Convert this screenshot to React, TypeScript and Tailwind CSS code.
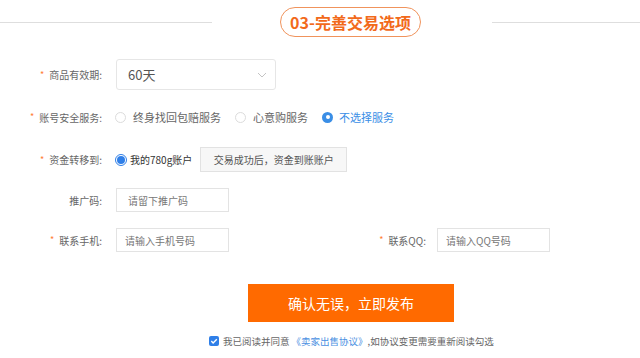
import type { ReactNode } from 'react'

function Label({ text, required = true, className = 'w-[102px]' }: { text: string; required?: boolean; className?: string }) {
  return (
    <div className={`${className} flex items-center justify-end text-[10px] text-[#666] shrink-0`}>
      {required && <span className="text-[#ff7d33] mr-[5px] text-[9px]">*</span>}
      <span>{text}:</span>
    </div>
  )
}

function Radio({ checked = false, variant = 'fill' }: { checked?: boolean; variant?: 'fill' | 'ring' }) {
  if (!checked) {
    return <span className="w-[11px] h-[11px] rounded-full border border-[#dcdcdc] bg-white shrink-0" />
  }
  if (variant === 'ring') {
    return (
      <span className="w-[12px] h-[12px] rounded-full border border-[#2f7fe8] bg-white flex items-center justify-center shrink-0">
        <span className="w-[8px] h-[8px] rounded-full bg-[#2f7fe8]" />
      </span>
    )
  }
  return (
    <span className="w-[11px] h-[11px] rounded-full bg-[#3a8ee6] flex items-center justify-center shrink-0">
      <span className="w-[4px] h-[4px] rounded-full bg-white" />
    </span>
  )
}

function Row({ children, className }: { children: ReactNode; className: string }) {
  return <div className={`flex items-center ${className}`}>{children}</div>
}

function TextInput({ placeholder, className = '' }: { placeholder: string; className?: string }) {
  return (
    <input
      placeholder={placeholder}
      className={`w-[113px] h-[24px] border border-[#e3e3e3] bg-white text-[10px] text-[#333] placeholder:text-[#777] outline-none ${className}`}
    />
  )
}

export default function App() {
  return (
    <div className="w-[640px] h-[358px] bg-white font-['Noto_Sans_CJK_SC',sans-serif] overflow-hidden">
      <div className="flex items-center h-[44px]">
        <div className="w-[212px] h-px bg-[#dedede]" />
        <div className="ml-[68px] w-[141px] h-[30px] rounded-full border border-[#f0935c] flex items-center justify-center text-[16px] font-bold text-[#f26a1b] leading-none">
          03-完善交易选项
        </div>
        <div className="ml-[71px] flex-1 h-px bg-[#dedede]" />
      </div>

      <Row className="mt-[15px] h-[31px]">
        <Label text="商品有效期" />
        <div className="ml-[14px] w-[160px] h-[31px] border border-[#e6e6e6] rounded-[3px] flex items-center justify-between pl-[11px] pr-[8px]">
          <span className="text-[13px] text-[#555]">60天</span>
          <svg width="10" height="6" viewBox="0 0 10 6" fill="none">
            <path d="M1 1l4 4 4-4" stroke="#c4c4c4" strokeWidth="1" />
          </svg>
        </div>
      </Row>

      <Row className="mt-[17px] h-[20px]">
        <Label text="账号安全服务" />
        <div className="ml-[13px] flex items-center text-[11px] text-[#666]">
          <Radio />
          <span className="ml-[7px]">终身找回包赔服务</span>
          <span className="ml-[14px] flex items-center">
            <Radio />
            <span className="ml-[7px]">心意购服务</span>
          </span>
          <span className="ml-[14px] flex items-center">
            <Radio checked />
            <span className="ml-[6px] text-[#3a8ee6]">不选择服务</span>
          </span>
        </div>
      </Row>

      <Row className="mt-[20px] h-[25px]">
        <Label text="资金转移到" />
        <div className="ml-[13px] flex items-center">
          <Radio checked variant="ring" />
          <span className="ml-[3px] text-[10px] text-[#333]">我的780g账户</span>
          <div className="ml-[8px] w-[147px] h-[25px] bg-[#f7f7f7] border border-[#e2e2e2] flex items-center justify-center text-[10px] text-[#555]">
            交易成功后，资金到账账户
          </div>
        </div>
      </Row>

      <Row className="mt-[16px] h-[24px]">
        <Label text="推广码" required={false} />
        <TextInput placeholder="请留下推广码" className="ml-[14px] pl-[11px]" />
      </Row>

      <Row className="mt-[16px] h-[24px]">
        <Label text="联系手机" />
        <TextInput placeholder="请输入手机号码" className="ml-[14px] pl-[8px]" />
        <Label text="联系QQ" className="w-[197px]" />
        <TextInput placeholder="请输入QQ号码" className="ml-[11px] pl-[8px]" />
      </Row>

      <div className="mt-[32px] flex">
        <button className="ml-[248px] w-[206px] h-[38px] bg-[#ff6a00] text-white text-[14px]">
          确认无误，立即发布
        </button>
      </div>

      <div className="mt-[12px] h-[14px] flex items-center pl-[209px] text-[9.5px] text-[#666]">
        <span className="w-[10px] h-[10px] rounded-[2px] bg-[#2f7fe8] flex items-center justify-center shrink-0">
          <svg width="8" height="8" viewBox="0 0 8 8" fill="none">
            <path d="M1.3 4.1l1.8 1.8L6.8 2.2" stroke="white" strokeWidth="1.4" />
          </svg>
        </span>
        <span className="ml-[4px]">我已阅读并同意</span>
        <span className="ml-[2px] text-[#4a90e2]">《卖家出售协议》</span>
        <span>,如协议变更需要重新阅读勾选</span>
      </div>
    </div>
  )
}
